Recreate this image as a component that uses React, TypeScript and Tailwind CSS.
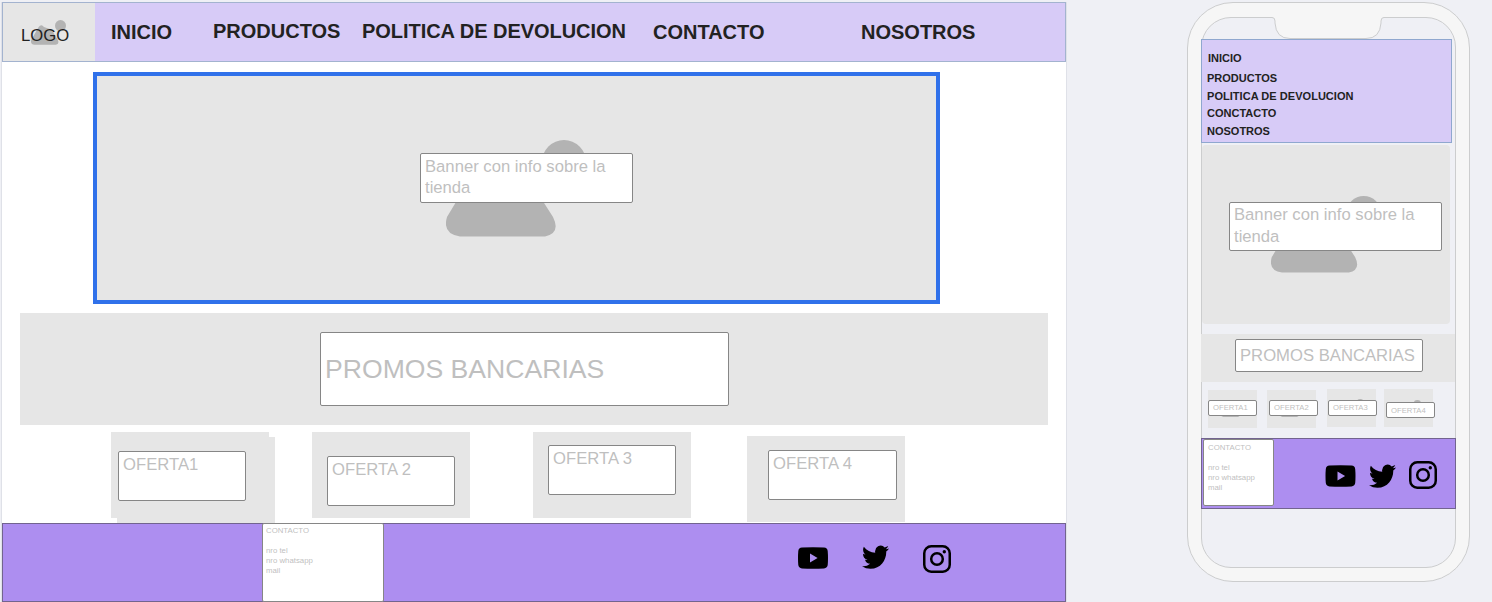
import React from "react";
import type { ReactNode } from "react";

function Field({ className = "", children }: { className?: string; children: ReactNode }) {
  return (
    <div
      className={`relative shrink-0 whitespace-nowrap rounded-[2px] border border-[#868686] bg-white text-[#bfbfbf] ${className}`}
    >
      {children}
    </div>
  );
}

function Mountain({ className = "" }: { className?: string }) {
  return (
    <svg className={className} viewBox="0 0 140 97" preserveAspectRatio="none" fill="#b3b3b3">
      <circle cx="118" cy="22" r="22" />
      <path d="M30 28 Q41 14 52 27 L72 34 Q80 34 84 41 L107 77 Q115 93 99 96.5 L14 96.5 Q-4 94 1 77 Q4 72 10 62 Z" />
    </svg>
  );
}

function YouTube({ className = "" }: { className?: string }) {
  return (
    <svg className={className} viewBox="0 0 30 22">
      <path
        fillRule="evenodd"
        d="M4 .6Q15-.3 26 .6Q29.4 1 29.7 4Q30.3 11 29.7 18Q29.4 21 26 21.4Q15 22.3 4 21.4Q.6 21 .3 18Q-.3 11 .3 4Q.6 1 4 .6ZM12 6.6V15.4L19.6 11Z"
      />
    </svg>
  );
}

function Twitter({ className = "" }: { className?: string }) {
  return (
    <svg className={className} viewBox="0 1.7 24 20.2" preserveAspectRatio="none">
      <path d="M23.953 4.57a10 10 0 01-2.825.775 4.958 4.958 0 002.163-2.723c-.951.555-2.005.959-3.127 1.184a4.92 4.92 0 00-8.384 4.482C7.69 8.095 4.067 6.13 1.64 3.162a4.822 4.822 0 00-.666 2.475c0 1.71.87 3.213 2.188 4.096a4.904 4.904 0 01-2.228-.616v.06a4.923 4.923 0 003.946 4.827 4.996 4.996 0 01-2.212.085 4.936 4.936 0 004.604 3.417 9.867 9.867 0 01-6.102 2.105c-.39 0-.779-.023-1.17-.067a13.995 13.995 0 007.557 2.209c9.053 0 13.998-7.496 13.998-13.985 0-.21 0-.42-.015-.63A9.935 9.935 0 0024 4.59z" />
    </svg>
  );
}

function Instagram({ className = "" }: { className?: string }) {
  return (
    <svg className={className} viewBox="0 0 28 28" fill="none" stroke="#000" strokeWidth="2.5">
      <rect x="1.25" y="1.25" width="25.5" height="25.5" rx="7" />
      <circle cx="14" cy="14" r="5.8" />
      <circle cx="21.3" cy="6.8" r="1.7" fill="#000" stroke="none" />
    </svg>
  );
}

function ContactLines() {
  return (
    <div className="text-[7.8px] leading-[10px]">
      <p>CONTACTO</p>
      <p className="mt-[10px]">nro tel</p>
      <p>nro whatsapp</p>
      <p>mail</p>
    </div>
  );
}

function Desktop() {
  return (
    <main className="mt-[2px] ml-px flex h-[600px] w-[1066px] shrink-0 flex-col border-x border-[#dfe1e8] bg-white">
      <header className="flex h-[60px] w-[1064px] shrink-0 border border-[#a3b3cf] bg-[#d7cbf7] text-[20px] leading-6 font-bold whitespace-nowrap text-[#222]">
        <div className="relative h-full w-[92px] shrink-0 bg-[#e6e6e6] pt-[20px] pl-[18px] text-[16.67px] leading-[25px] font-normal">
          <Mountain className="absolute top-[17px] left-[28px] h-[25px] w-[35px]" />
          <span className="relative">LOGO</span>
        </div>
        <nav className="flex pt-[17px]">
          <span className="ml-[16px] w-[102px]">INICIO</span>
          <span className="-mt-px w-[149px]">PRODUCTOS</span>
          <span className="-mt-px w-[291px] tracking-[-0.04px]">POLITICA DE DEVOLUCION</span>
          <span className="w-[208px]">CONTACTO</span>
          <span>NOSOTROS</span>
        </nav>
      </header>

      <section className="relative mt-[10px] ml-[91px] h-[232px] w-[847px] shrink-0 border-4 border-[#3071ea] bg-[#e6e6e6] pt-[77px] pl-[323px]">
        <Mountain className="absolute top-[64px] left-[349px] h-[97px] w-[140px]" />
        <Field className="h-[50px] w-[213px] pt-[2px] pl-[4px] text-[16.67px] leading-[21px]">
          Banner con info sobre la
          <br />
          tienda
        </Field>
      </section>

      <section className="mt-[9px] ml-[18px] h-[112px] w-[1028px] shrink-0 bg-[#e6e6e6] pt-[19px] pl-[300px]">
        <Field className="h-[74px] w-[409px] pt-[20px] pl-[4px] text-[26.6px] leading-[32px]">
          PROMOS BANCARIAS
        </Field>
      </section>

      <section className="mt-[7px] flex h-[91px] shrink-0 text-[16.67px] leading-[21px]">
        <div className="ml-[109px] h-[86px] w-[158px] bg-[#e6e6e6]">
          <div className="relative h-full">
            <div className="absolute top-[5px] left-[6px] h-[86px] w-[158px] bg-[#e6e6e6]" />
            <div className="pt-[19px] pl-[7px]">
              <Field className="h-[50px] w-[128px] pt-[2px] pl-[4px]">OFERTA1</Field>
            </div>
          </div>
        </div>
        <div className="ml-[43px] h-[86px] w-[158px] bg-[#e6e6e6] pt-[24px] pl-[15px]">
          <Field className="h-[50px] w-[128px] pt-[2px] pl-[4px]">OFERTA 2</Field>
        </div>
        <div className="ml-[63px] h-[86px] w-[158px] bg-[#e6e6e6] pt-[13px] pl-[15px]">
          <Field className="h-[50px] w-[128px] pt-[2px] pl-[4px]">OFERTA 3</Field>
        </div>
        <div className="mt-[4px] ml-[56px] h-[86px] w-[158px] bg-[#e6e6e6] pt-[14px] pl-[21px]">
          <Field className="h-[50px] w-[129px] pt-[2px] pl-[4px]">OFERTA 4</Field>
        </div>
      </section>

      <footer className="flex h-[79px] w-[1064px] shrink-0 border border-[#72648f] bg-[#ad8ef0]">
        <Field className="-mt-px ml-[259px] h-[79px] w-[122px] pt-[2px] pl-[3px]">
          <ContactLines />
        </Field>
        <div className="flex pt-[21px]">
          <YouTube className="mt-[2px] ml-[414px] h-[22px] w-[30px]" />
          <Twitter className="ml-[34px] h-[24px] w-[27px]" />
          <Instagram className="ml-[34px] h-[28px] w-[28px]" />
        </div>
      </footer>
    </main>
  );
}

function Phone() {
  return (
    <aside className="relative mt-[2px] ml-[120px] h-[580px] w-[283px] shrink-0 rounded-[46px] border border-[#cccdce] bg-[#f6f6f6] px-[13px] pt-[14px] pb-[13px]">
      <div className="h-full rounded-[30px] border border-[#cccdce] bg-[#eff0f5]">
        <div className="-mx-px flex flex-col pt-[21px]">
          <header className="h-[104px] w-[251px] border border-[#8fa7cf] bg-[#d7cbf7] pl-[5px] text-[11px] leading-[14px] font-bold whitespace-nowrap text-[#222]">
            <p className="mt-[11px] ml-px">INICIO</p>
            <p className="mt-[6px]">PRODUCTOS</p>
            <p className="mt-[4px] tracking-[0.04px]">POLITICA DE DEVOLUCION</p>
            <p className="mt-[3px]">CONCTACTO</p>
            <p className="mt-[4px]">NOSOTROS</p>
          </header>

          <section className="relative mt-[2px] ml-px h-[179px] w-[248px] rounded-[4px] bg-[#e6e6e6] pt-[57px] pl-[27px]">
            <Mountain className="absolute top-[51px] left-[69px] h-[77px] w-[110px]" />
            <Field className="h-[49px] w-[213px] pt-px pl-[4px] text-[16.67px] leading-[22px]">
              Banner con info sobre la
              <br />
              tienda
            </Field>
          </section>

          <section className="mt-[10px] h-[48px] w-[254px] bg-[#e6e6e6] pt-[5px] pl-[34px]">
            <Field className="h-[33px] w-[188px] pt-[5px] pl-[4px] text-[16.67px] leading-[21px]">
              PROMOS BANCARIAS
            </Field>
          </section>

          <section className="mt-[7px] flex h-[49px] text-[7.7px] leading-[13px]">
            <div className="relative mt-px ml-[7px] h-[38px] w-[49px] bg-[#e6e6e6] pt-[10px]">
              <Mountain className="absolute top-[10px] left-[13px] h-[17px] w-[24px]" />
              <Field className="h-[16px] w-[49px] pl-[4px]">OFERTA1</Field>
            </div>
            <div className="relative mt-px ml-[10px] h-[38px] w-[49px] bg-[#e6e6e6] pt-[10px] pl-[2px]">
              <Mountain className="absolute top-[10px] left-[13px] h-[17px] w-[24px]" />
              <Field className="h-[16px] w-[49px] pl-[4px]">OFERTA2</Field>
            </div>
            <div className="relative ml-[11px] h-[38px] w-[49px] bg-[#e6e6e6] pt-[11px] pl-px">
              <Mountain className="absolute top-[10px] left-[13px] h-[17px] w-[24px]" />
              <Field className="h-[16px] w-[49px] pl-[4px]">OFERTA3</Field>
            </div>
            <div className="relative ml-[8px] h-[38px] w-[49px] bg-[#e6e6e6] pt-[13px] pl-[2px]">
              <Mountain className="absolute top-[11px] left-[14px] h-[15px] w-[23px]" />
              <Field className="h-[16px] w-[49px] pt-px pl-[4px]">OFERTA4</Field>
            </div>
          </section>

          <footer className="flex h-[71px] w-[255px] border border-[#72648f] bg-[#ad8ef0]">
            <Field className="ml-px h-[67px] w-[71px] pt-[3px] pl-[4px]">
              <ContactLines />
            </Field>
            <div className="flex pt-[22px]">
              <YouTube className="mt-[4px] ml-[51px] h-[22px] w-[31px]" />
              <Twitter className="mt-[3px] ml-[13px] h-[24px] w-[27px]" />
              <Instagram className="ml-[13px] h-[28px] w-[28px]" />
            </div>
          </footer>
        </div>
      </div>
      <svg className="absolute top-[14px] left-[84px] h-[23px] w-[112px]" viewBox="0 0 112 23">
        <path
          d="M0 0H112V.5Q109 .5 109 4V6Q108 21.5 94 21.5H18Q4 21.5 3 6V4Q3 .5 0 .5Z"
          fill="#f6f6f6"
        />
        <path
          d="M0 .5Q3 .5 3 4V6Q4 21.5 18 21.5H94Q108 21.5 109 6V4Q109 .5 112 .5"
          fill="none"
          stroke="#cccdce"
        />
      </svg>
    </aside>
  );
}

export default function App() {
  return (
    <div className="flex h-[602px] w-[1492px] overflow-hidden bg-[#eff0f5] font-['Liberation_Sans',Arial,sans-serif]">
      <Desktop />
      <Phone />
    </div>
  );
}
